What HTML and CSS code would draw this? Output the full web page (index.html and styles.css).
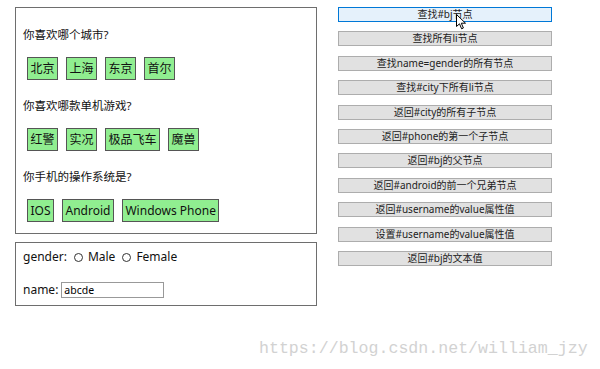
FILE: index.html
```html
<!DOCTYPE html>
<html lang="zh-CN">
<head>
    <meta charset="UTF-8">
    <title>DOM 节点操作</title>
    <link rel="stylesheet" href="styles.css">
</head>
<body>
    <div class="page">
        <!-- 左侧：选择题与表单 -->
        <div class="left">
            <div class="box questions">
                <div class="section">
                    <p class="question">你喜欢哪个城市?</p>
                    <ul id="city" class="options">
                        <li id="bj">北京</li>
                        <li>上海</li>
                        <li>东京</li>
                        <li>首尔</li>
                    </ul>
                </div>
                <div class="section">
                    <p class="question">你喜欢哪款单机游戏?</p>
                    <ul id="game" class="options">
                        <li>红警</li>
                        <li>实况</li>
                        <li>极品飞车</li>
                        <li>魔兽</li>
                    </ul>
                </div>
                <div class="section">
                    <p class="question">你手机的操作系统是?</p>
                    <ul id="phone" class="options">
                        <li>IOS</li>
                        <li id="android">Android</li>
                        <li>Windows Phone</li>
                    </ul>
                </div>
            </div>

            <div class="box form">
                <div class="form-row">
                    gender:
                    <label class="radio"><input type="radio" name="gender" value="male"> Male</label>
                    <label class="radio"><input type="radio" name="gender" value="female"> Female</label>
                </div>
                <div class="form-row">
                    name: <input type="text" id="username" class="text-input" value="abcde">
                </div>
            </div>
        </div>

        <!-- 右侧：操作按钮 -->
        <div class="actions">
            <button class="btn hover">查找#bj节点</button>
            <button class="btn">查找所有li节点</button>
            <button class="btn">查找name=gender的所有节点</button>
            <button class="btn">查找#city下所有li节点</button>
            <button class="btn">返回#city的所有子节点</button>
            <button class="btn">返回#phone的第一个子节点</button>
            <button class="btn">返回#bj的父节点</button>
            <button class="btn">返回#android的前一个兄弟节点</button>
            <button class="btn">返回#username的value属性值</button>
            <button class="btn">设置#username的value属性值</button>
            <button class="btn">返回#bj的文本值</button>
        </div>
    </div>

    <!-- 鼠标指针 -->
    <svg class="cursor" width="11" height="16" viewBox="0 0 11 16">
        <path d="M0.5 0.5 L0.5 12.5 L3.5 9.8 L5.6 14.8 L7.4 14 L5.3 9.2 L9.5 9.2 Z" fill="#fff" stroke="#000" stroke-width="1" stroke-linejoin="round"/>
    </svg>

    <div class="watermark">https://blog.csdn.net/william_jzy</div>
</body>
</html>
```

FILE: styles.css
```css
/* 基础重置 */
* {
    margin: 0;
    padding: 0;
    box-sizing: border-box;
}

body {
    background: #fff;
    font-family: "Noto Sans", "Noto Sans CJK SC", sans-serif;
    font-size: 12px;
    color: #111;
}

.page {
    display: flex;
    align-items: flex-start;
    padding: 7px 0 0 15px;
}

/* 左侧区域 */
.left {
    width: 302px;
}

.box {
    border: 1px solid #6e6e6e;
}

.questions {
    height: 227px;
    padding: 19px 7px 0;
    display: flex;
    flex-direction: column;
    gap: 18px;
}

.question {
    font-size: 11.5px;
    line-height: 16px;
    margin-bottom: 14px;
}

.options {
    list-style: none;
    display: flex;
    gap: 8px;
    padding-left: 4px;
}

.options li {
    height: 23px;
    line-height: 21px;
    padding: 0 2.5px;
    background: #90ee90;
    border: 1px solid #555;
}

/* 表单 */
.form {
    margin-top: 8px;
    height: 64px;
    padding: 6px 7px 0;
}

.form-row {
    display: flex;
    align-items: center;
    height: 16px;
    line-height: 16px;
}

.form-row + .form-row {
    margin-top: 17px;
}

.radio {
    display: flex;
    align-items: center;
    margin-left: 7px;
}

.radio input {
    appearance: none;
    width: 9px;
    height: 9px;
    border: 1px solid #333;
    border-radius: 50%;
    margin-right: 5px;
}

.text-input {
    width: 103px;
    height: 16px;
    margin-left: 3px;
    border: 1px solid #999;
    padding: 0 2px;
    font-family: "Noto Sans", sans-serif;
    font-size: 10.5px;
    color: #000;
    outline: none;
}

/* 右侧按钮 */
.actions {
    margin-left: 21px;
    width: 214px;
    display: flex;
    flex-direction: column;
    gap: 9.4px;
}

.btn {
    height: 15px;
    line-height: 13px;
    background: #e1e1e1;
    border: 1px solid #adadad;
    font-family: "Noto Sans", "Noto Sans CJK SC", sans-serif;
    font-size: 10px;
    color: #222;
}

.btn.hover {
    background: #e5f1fb;
    border-color: #0078d7;
}

.cursor {
    position: absolute;
    left: 456px;
    top: 14px;
}

.watermark {
    position: absolute;
    left: 259px;
    top: 338px;
    font-family: "Liberation Mono", monospace;
    font-size: 16.6px;
    line-height: 22px;
    color: #d2d2d2;
}
```
